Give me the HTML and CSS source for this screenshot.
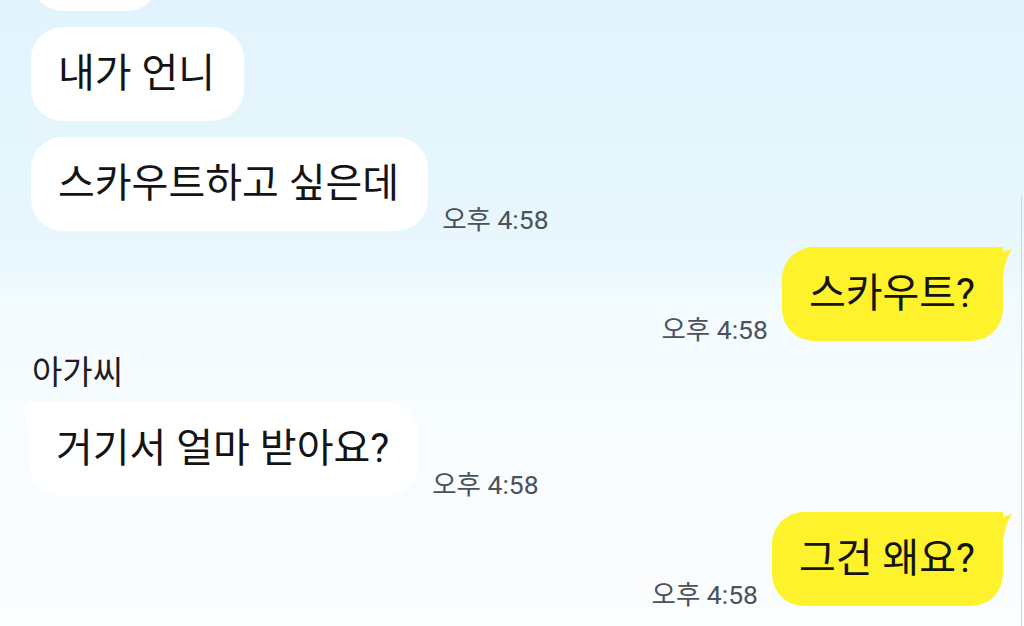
FILE: index.html
```html
<!DOCTYPE html>
<html lang="ko">
<head>
<meta charset="utf-8">
<link rel="stylesheet" href="styles.css">
</head>
<body>
<div class="screen">
  <div class="chat">
    <div class="row left first">
      <div class="bubble white stub"></div>
    </div>
    <div class="row left">
      <div class="bubble white">내가 언니</div>
    </div>
    <div class="row left">
      <div class="bubble white">스카우트하고 싶은데</div>
      <span class="time">오후 4:58</span>
    </div>
    <div class="row right">
      <span class="time">오후 4:58</span>
      <div class="bubble yellow">스카우트?
        <svg class="tail-r" viewBox="0 0 38 44" width="38" height="44"><path d="M0 0 L8 0 Q15 1 18 8 L37 2 Q30 12 28 30 L28 44 L0 44 Z" fill="#fef22c"/></svg>
      </div>
    </div>
    <div class="group">
      <div class="name">아가씨</div>
      <div class="row left">
        <div class="bubble white tailed">거기서 얼마 받아요?
          <svg class="tail-l" viewBox="0 0 38 44" width="38" height="44"><path d="M38 0 L30 0 Q23 1 20 8 L1 2 Q8 12 10 30 L10 44 L38 44 Z" fill="#ffffff"/></svg>
        </div>
        <span class="time">오후 4:58</span>
      </div>
    </div>
    <div class="row right">
      <span class="time">오후 4:58</span>
      <div class="bubble yellow">그건 왜요?
        <svg class="tail-r" viewBox="0 0 38 44" width="38" height="44"><path d="M0 0 L8 0 Q15 1 18 8 L37 2 Q30 12 28 30 L28 44 L0 44 Z" fill="#fef22c"/></svg>
      </div>
    </div>
  </div>
  <div class="edge"></div>
</div>
</body>
</html>
```
FILE: styles.css
```css
html, body {
  margin: 0;
  padding: 0;
}
body {
  width: 1024px;
  height: 626px;
  overflow: hidden;
  font-family: Roboto, "Noto Sans CJK KR", sans-serif;
  color: #141414;
}
.screen {
  position: relative;
  width: 1024px;
  height: 626px;
  overflow: hidden;
  background: linear-gradient(180deg, #e1f3fc 0px, #e6f6fd 180px, #ebf8fd 272px, #f2fbfe 292px, #f7fcfe 400px, #fbfdfe 626px);
}
.chat {
  display: flex;
  flex-direction: column;
  margin-top: -83px;
  padding: 0 21px 0 31px;
}
.row {
  display: flex;
  align-items: flex-end;
  margin-top: 16px;
}
.row.first {
  margin-top: 0;
}
.row.right {
  justify-content: flex-end;
}
.bubble {
  position: relative;
  font-size: 40px;
  line-height: 50px;
  padding: 22px 29px 22px 27px;
  border-radius: 32px;
  white-space: nowrap;
}
.bubble.stub {
  width: 72px;
  height: 50px;
}
.bubble.white {
  background: #ffffff;
}
.bubble.tailed {
  border-top-left-radius: 0;
  margin-left: -2px;
}
.bubble.yellow {
  background: #fef22c;
  border-top-right-radius: 0;
  padding: 22px 28px 22px 27px;
}
.tail-r {
  position: absolute;
  top: 0;
  right: -10px;
}
.tail-l {
  position: absolute;
  top: 0;
  left: -10px;
}
.time {
  font-size: 26.5px;
  line-height: 30px;
  color: #4c525a;
  margin: 0 14px -4px;
  white-space: nowrap;
}
.group {
  display: flex;
  flex-direction: column;
  margin-top: 14px;
}
.group .row {
  margin-top: 11px;
}
.name {
  font-size: 33px;
  line-height: 36px;
  color: #1e1e1e;
  margin-left: 1px;
}
.edge {
  position: absolute;
  right: 2px;
  top: 195px;
  bottom: 0;
  width: 1px;
  background: #d3d8dc;
}
```
